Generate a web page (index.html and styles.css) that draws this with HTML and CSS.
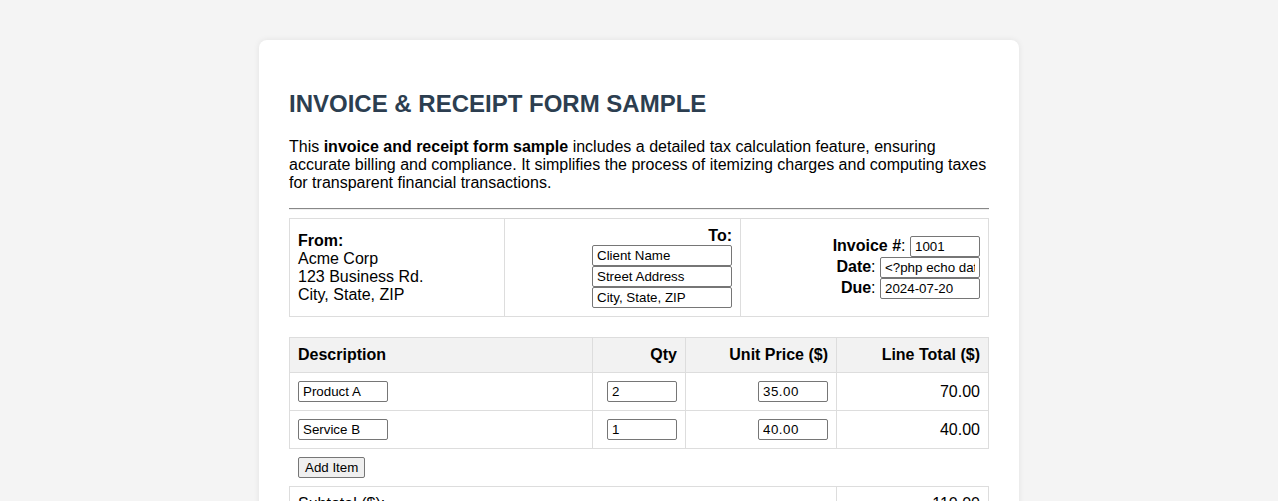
FILE: index.html
```html
<!DOCTYPE html>
<html lang="en">
<head>
    <meta charset="UTF-8">
    <meta name="viewport" content="width=device-width, initial-scale=1.0">
    <title>Invoice &amp; Receipt Form Sample</title>
    <link rel="stylesheet" href="styles.css">
</head>
<body>

    <!-- Main Card -->
    <div class="container">
        <h1>INVOICE &amp; RECEIPT FORM SAMPLE</h1>
        <p>This <strong>invoice and receipt form sample</strong> includes a detailed tax calculation feature, ensuring accurate billing and compliance. It simplifies the process of itemizing charges and computing taxes for transparent financial transactions.</p>
        <hr>

        <!-- Parties Section -->
        <table class="parties">
            <colgroup>
                <col class="col-from">
                <col class="col-to">
                <col class="col-meta">
            </colgroup>
            <tr>
                <td class="from">
                    <strong>From:</strong><br>
                    Acme Corp<br>
                    123 Business Rd.<br>
                    City, State, ZIP
                </td>
                <td class="to">
                    <strong>To:</strong><br>
                    <input type="text" class="addr-input" value="Client Name"><br>
                    <input type="text" class="addr-input" value="Street Address"><br>
                    <input type="text" class="addr-input" value="City, State, ZIP">
                </td>
                <td class="meta">
                    <strong>Invoice #</strong>: <input type="text" class="num-input" value="1001"><br>
                    <strong>Date</strong>: <input type="text" class="date-input" value="&lt;?php echo date('Y-m-d'); ?&gt;"><br>
                    <strong>Due</strong>: <input type="text" class="date-input" value="2024-07-20">
                </td>
            </tr>
        </table>

        <!-- Items Section -->
        <table class="items">
            <colgroup>
                <col class="col-desc">
                <col class="col-qty">
                <col class="col-price">
                <col class="col-total">
            </colgroup>
            <thead>
                <tr>
                    <th>Description</th>
                    <th class="right">Qty</th>
                    <th class="right">Unit Price ($)</th>
                    <th class="right">Line Total ($)</th>
                </tr>
            </thead>
            <tbody>
                <tr>
                    <td><input type="text" class="desc-input" value="Product A"></td>
                    <td class="right"><input type="text" class="small-input" value="2"></td>
                    <td class="right"><input type="text" class="small-input price" value="35.00"></td>
                    <td class="right">70.00</td>
                </tr>
                <tr>
                    <td><input type="text" class="desc-input" value="Service B"></td>
                    <td class="right"><input type="text" class="small-input" value="1"></td>
                    <td class="right"><input type="text" class="small-input price" value="40.00"></td>
                    <td class="right">40.00</td>
                </tr>
            </tbody>
        </table>

        <div class="add-row">
            <button type="button" class="add-btn">Add Item</button>
        </div>

        <!-- Totals Section -->
        <table class="totals">
            <colgroup>
                <col class="col-label">
                <col class="col-total">
            </colgroup>
            <tr>
                <td>Subtotal ($):</td>
                <td class="right">110.00</td>
            </tr>
            <tr>
                <td>Tax (10%):</td>
                <td class="right">11.00</td>
            </tr>
            <tr>
                <td><strong>Total ($):</strong></td>
                <td class="right"><strong>121.00</strong></td>
            </tr>
        </table>
    </div>

</body>
</html>
```

FILE: styles.css
```css
/* Global Styles */
body {
    margin: 0;
    font-family: Arial, "Liberation Sans", sans-serif;
    font-size: 16px;
    background-color: #f4f4f4;
    color: #000;
}

/* Card */
.container {
    max-width: 700px;
    margin: 40px auto;
    padding: 30px;
    background: #fff;
    border-radius: 8px;
    box-shadow: 0 0 6px rgba(0, 0, 0, 0.08);
}

h1 {
    font-size: 24px;
    color: #2c3e50;
    margin: 20px 0;
}

p {
    margin: 16px 0;
    line-height: 18px;
}

hr {
    margin: 0 0 8px;
    border: none;
    border-top: 1px solid #888;
    border-bottom: 1px solid #eee;
}

/* Tables */
table {
    width: 699px;
    border-collapse: collapse;
    table-layout: fixed;
}

td, th {
    border: 1px solid #ddd;
    padding: 8px;
    line-height: 18px;
}

th {
    background-color: #f2f2f2;
    font-weight: bold;
    text-align: left;
}

.right {
    text-align: right;
}

/* Form inputs */
input, button {
    font-family: Arial, "Liberation Sans", sans-serif;
    font-size: 13.333px;
}

input {
    box-sizing: border-box;
    height: 21px;
    padding: 1px 4px;
    border: 1px solid #767676;
    border-radius: 2px;
    vertical-align: baseline;
}

/* Parties table */
.parties {
    margin-bottom: 20px;
}

.col-from { width: 215px; }
.col-to { width: 236px; }
.col-meta { width: 248px; }

.to, .meta {
    text-align: right;
}

.addr-input {
    width: 140px;
}

.num-input {
    width: 70px;
}

.date-input {
    width: 100px;
}

/* Items table */
.col-desc { width: 303px; }
.col-qty { width: 93px; }
.col-price { width: 151px; }
.col-total { width: 152px; }

.desc-input {
    width: 90px;
}

.small-input {
    width: 70px;
}

.price {
    letter-spacing: 0.5px;
}

/* Add item */
.add-row {
    padding: 8px 9px;
}

.add-btn {
    height: 21px;
    padding: 1px 6px;
    background-color: #efefef;
    border: 1px solid #767676;
    border-radius: 2px;
    color: #000;
    cursor: pointer;
}

/* Totals */
.col-label { width: 547px; }
```
